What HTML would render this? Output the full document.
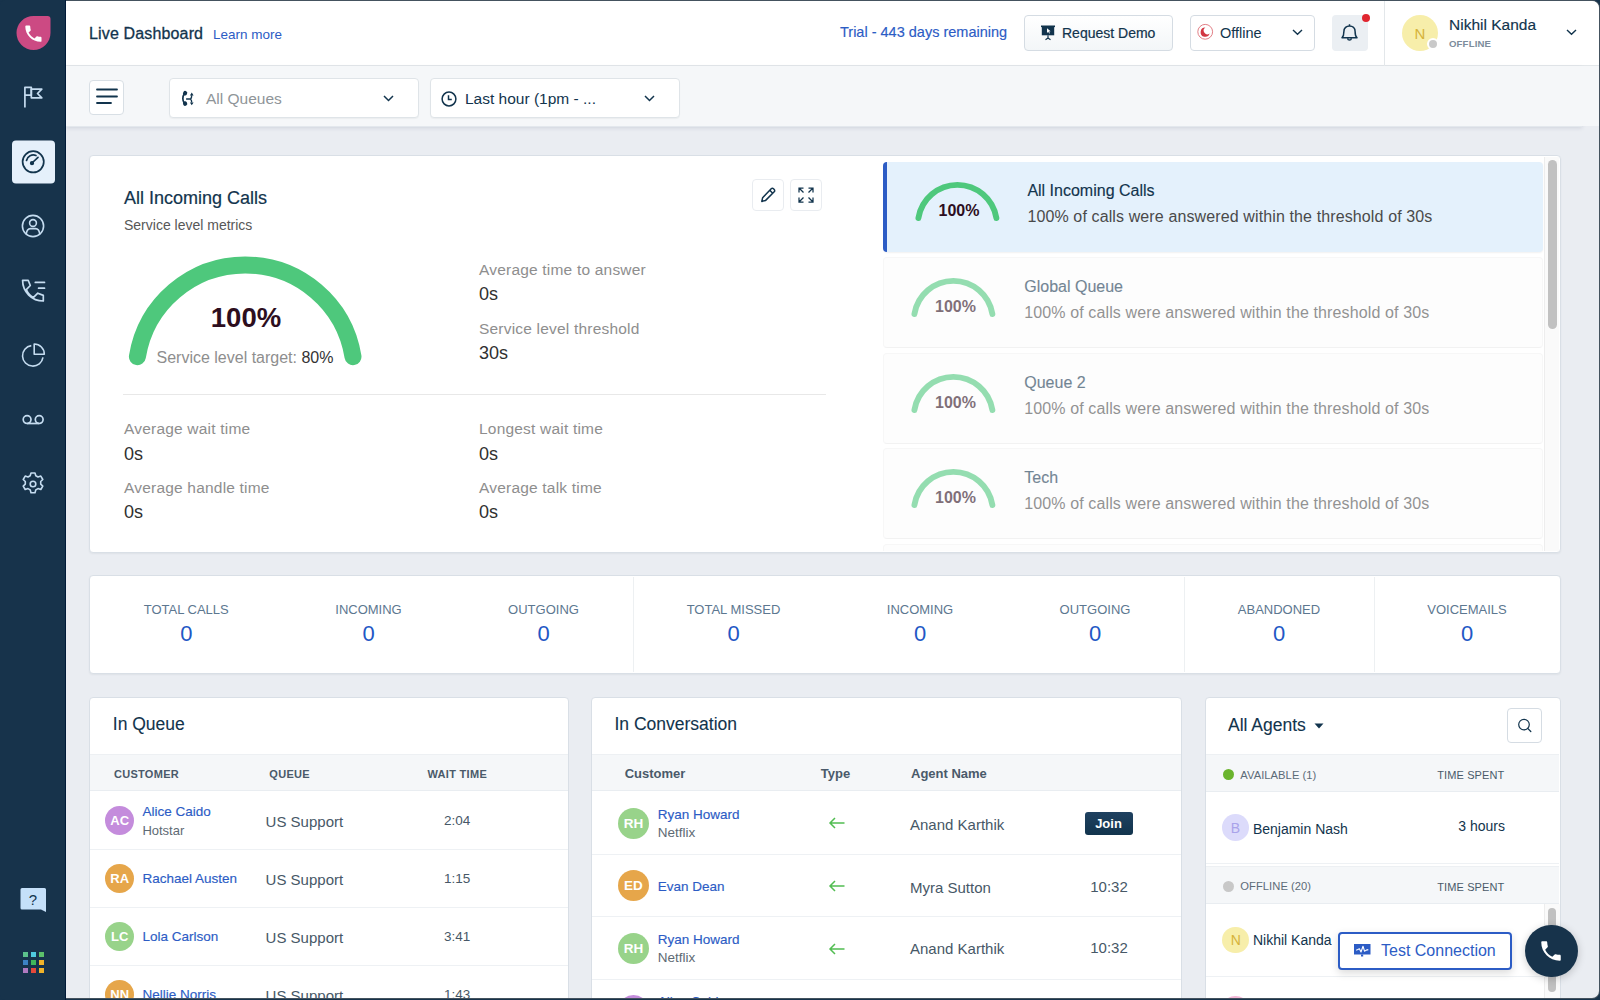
<!DOCTYPE html>
<html><head><meta charset="utf-8">
<style>
*{box-sizing:border-box;margin:0;padding:0}
html,body{width:1600px;height:1000px;overflow:hidden;background:#17334b}
body{font-family:"Liberation Sans",sans-serif;color:#12344d;position:relative}
.t{position:absolute;white-space:nowrap}
#side{position:absolute;left:0;top:0;width:66px;height:1000px;background:#17334b;border-radius:5px 0 0 5px}
#sideline{position:absolute;left:65px;top:0;width:1px;height:1000px;background:#001a38}
#win{position:absolute;left:66px;top:0;width:1534px;height:999px;border-radius:0 8px 8px 0;overflow:hidden;background:#44525e}
#inner{position:absolute;left:0;top:1px;width:1533px;height:997px;border-radius:0 7px 7px 0;overflow:hidden;background:#eaedf2}
#hdr{position:absolute;left:0;top:0;width:1533px;height:65px;background:#fff;border-bottom:1px solid #e1e5e9}
#fbar{position:absolute;left:0;top:65px;width:1533px;height:61px;background:#f5f7f9;box-shadow:0 1px 3px rgba(40,60,80,.18)}
.card{position:absolute;background:#fff;border:1px solid #dde3e8;border-radius:4px}
.btn{position:absolute;border:1px solid #cfd7df;border-radius:4px;background:#f5f7f9}

#pg{position:absolute;left:-66px;top:-1px;width:1600px;height:1000px}
.lh{line-height:1}
.ic{position:absolute;overflow:visible}
</style></head><body>
<div id="side">
<svg width="66" height="1000" viewBox="0 0 66 1000" style="position:absolute;left:0;top:0">
  <!-- logo -->
  <path d="M33.5 16 H47.5 A3 3 0 0 1 50.5 19 V33 A17 17 0 1 1 33.5 16 Z" fill="#cc4a83"/>
  <path transform="translate(22.6 22.9) scale(0.9)" d="M6.62 10.79c1.44 2.83 3.76 5.14 6.59 6.59l2.2-2.2c.27-.27.67-.36 1.02-.24 1.12.37 2.33.57 3.57.57.55 0 1 .45 1 1V20c0 .55-.45 1-1 1-9.39 0-17-7.61-17-17 0-.55.45-1 1-1h3.5c.55 0 1 .45 1 1 0 1.250.2 2.45.57 3.57.11.35.03.74-.25 1.02l-2.2 2.2z" fill="#fff"/>
  <!-- flag -->
  <g fill="none" stroke="#c5dcf0" stroke-width="1.7" stroke-linejoin="round">
    <path d="M24.9 107.5 V87.3 H31.3 V95.1 H24.9"/>
    <path d="M31.3 89.2 H41.8 L37.5 93.5 L41.8 97.8 H31.3 Z"/>
  </g>
  <!-- active -->
  <rect x="12" y="140.5" width="43" height="43" rx="4" fill="#e5f0fb"/>
  <g fill="none" stroke="#12344d" stroke-width="1.7">
    <circle cx="33.2" cy="161.8" r="10.6"/>
    <path d="M26.5 160.5 A7 7 0 0 1 36 155.5" stroke-linecap="round"/>
    <path d="M32 163 L38 157.3" stroke-linecap="round"/>
    <circle cx="32" cy="163.2" r="1.3" fill="#12344d"/>
  </g>
  <!-- contact -->
  <g fill="none" stroke="#c5dcf0" stroke-width="1.6">
    <circle cx="33" cy="226" r="10.6"/>
    <circle cx="33" cy="223" r="3.4"/>
    <path d="M26.2 234.5 C26.5 230.5 28 228.6 30.5 228.6 H35.5 C38 228.6 39.5 230.5 39.8 234.5"/>
  </g>
  <!-- call list -->
  <g fill="none" stroke="#c5dcf0" stroke-width="1.7" stroke-linejoin="round" stroke-linecap="round">
    <path d="M22.6 280.3 H28.2 L30.3 285.5 L26.3 289.6 C28 293.5 30.5 296 33.5 297.4 L37.8 293.2 L43.3 295.4 V301 C32 301 22.6 292 22.6 280.3 Z"/>
    <path d="M35.3 282.4 H44.5"/><path d="M38.6 288.2 H44.5"/>
  </g>
  <!-- pie -->
  <g fill="none" stroke="#c5dcf0" stroke-width="1.6" stroke-linejoin="round">
    <path d="M31.3 345.6 A10.3 10.3 0 1 0 43 357.4"/>
    <path d="M34.2 344 A10.2 10.2 0 0 1 44.3 354.3 H34.2 Z"/>
  </g>
  <!-- voicemail -->
  <g fill="none" stroke="#c5dcf0" stroke-width="1.7">
    <circle cx="27.1" cy="419.6" r="3.9"/>
    <circle cx="39.2" cy="419.6" r="3.9"/>
    <path d="M27.1 423.5 H39.2"/>
  </g>
  <!-- gear -->
  <g fill="none" stroke="#c5dcf0" stroke-width="1.6" stroke-linejoin="round">
    <path d="M31 473 h4 l0.8 2.8 l2.2 1.2 l2.8-0.9 l2 3.4 l-2.1 2 v2.6 l2.1 2 l-2 3.4 l-2.8-0.9 l-2.2 1.3 l-0.8 2.8 h-4 l-0.8-2.8 l-2.2-1.3 l-2.8 0.9 l-2-3.4 l2.1-2 v-2.6 l-2.1-2 l2-3.4 l2.8 0.9 l2.2-1.2 z"/>
    <circle cx="33" cy="484" r="2.8"/>
  </g>
  <!-- help -->
  <path d="M22 888 H44.5 A1.5 1.5 0 0 1 46 889.5 V912 L41 909.5 H22 A1.5 1.5 0 0 1 20.5 908 V889.5 A1.5 1.5 0 0 1 22 888 Z" fill="#c5e0f9"/>
  <text x="33" y="904.5" font-family="Liberation Sans" font-size="15" fill="#12344d" text-anchor="middle">?</text>
  <!-- apps -->
  <rect x="23" y="952" width="5" height="5" fill="#5cc28c"/>
  <rect x="31" y="952" width="5" height="5" fill="#4fcbe0"/>
  <rect x="39" y="952" width="5" height="5" fill="#5cc06a"/>
  <rect x="23" y="960" width="5" height="5" fill="#3c82c4"/>
  <rect x="31" y="960" width="5" height="5" fill="#41b75a"/>
  <rect x="39" y="960" width="5" height="5" fill="#f0b329"/>
  <rect x="23" y="968" width="5" height="5" fill="#b07ac0"/>
  <rect x="31" y="968" width="5" height="5" fill="#e5493a"/>
  <rect x="39" y="968" width="5" height="5" fill="#f0b329"/>
</svg>
</div>
<div id="sideline"></div>
<div id="win"><div id="inner">
<div id="pg">
  <div style="position:absolute;left:66px;top:0;width:1534px;height:66px;background:#fff;border-bottom:1px solid #e3e7ea"></div>
  <div style="position:absolute;left:66px;top:66px;width:1516px;height:60px;background:#f5f7f9;box-shadow:0 1px 0 #e3e8ed,0 2px 4px rgba(40,60,90,.14)"></div><div style="position:absolute;left:1582px;top:66px;width:18px;height:60px;background:#f5f7f9"></div>
  <div class="t lh" style="left:89px;top:26px;font-size:16px;letter-spacing:0.15px;color:#12344d;-webkit-text-stroke:0.3px #12344d">Live Dashboard</div>
  <div class="t lh" style="left:213px;top:28px;font-size:13.5px;color:#2c5cc5">Learn more</div>
  <div class="t lh" style="left:840px;top:25.3px;font-size:14.5px;color:#2c5cc5;-webkit-text-stroke:0.15px #2c5cc5">Trial - 443 days remaining</div>
  <div style="position:absolute;left:1024px;top:15px;width:149px;height:36px;border:1px solid #d5dce3;border-radius:4px;background:linear-gradient(#fff,#f3f6f8)"></div>
  <svg class="ic" style="left:1041px;top:25px" width="15" height="16" viewBox="0 0 15 16">
    <rect x="0" y="0.5" width="14" height="1.6" fill="#12344d"/>
    <rect x="0.8" y="1.5" width="12.4" height="8.8" fill="#12344d"/>
    <path d="M6 3.3 L6 8 L7.2 6.8 L8.2 8.6 L8.9 8.2 L8 6.5 L9.6 6.3 Z" fill="#fff"/>
    <path d="M7 10.3 V13 M7 13 L4.5 14.8 M7 13 L9.5 14.8" stroke="#12344d" stroke-width="1.2"/>
  </svg>
  <div class="t lh" style="left:1062px;top:26px;font-size:14px;color:#12344d;-webkit-text-stroke:0.2px #12344d">Request Demo</div>
  <div style="position:absolute;left:1190px;top:15px;width:125px;height:36px;border:1px solid #d5dce3;border-radius:4px;background:#fff"></div>
  <svg class="ic" style="left:1197px;top:24px" width="17" height="17" viewBox="0 0 17 17">
    <circle cx="8.2" cy="7.8" r="7.4" fill="none" stroke="#e27f86" stroke-width="1"/>
    <path d="M8.3 3.6 A4.6 4.6 0 1 0 12.6 9.6 A3.6 3.6 0 0 1 8.3 3.6 Z" fill="#d23642"/>
  </svg>
  <div class="t lh" style="left:1220px;top:25.5px;font-size:14.5px;color:#12344d">Offline</div>
  <svg class="ic" style="left:1292px;top:29px" width="11" height="7" viewBox="0 0 11 7"><path d="M1 1 L5.5 5.3 L10 1" fill="none" stroke="#12344d" stroke-width="1.4"/></svg>
  <div style="position:absolute;left:1332px;top:15px;width:36px;height:36px;border-radius:4px;background:#ebeff3"></div>
  <svg class="ic" style="left:1340px;top:23px" width="19" height="19" viewBox="0 0 19 19">
    <path d="M9.5 1.2 V2.6 M2 14.8 C3.8 13 3.9 11 3.9 8.4 C3.9 5.1 6.4 2.9 9.5 2.9 C12.6 2.9 15.1 5.1 15.1 8.4 C15.1 11 15.2 13 17 14.8 Z M7.6 15.6 A1.95 1.95 0 0 0 11.4 15.6" fill="none" stroke="#12344d" stroke-width="1.5" stroke-linejoin="round"/>
  </svg>
  <div style="position:absolute;left:1361.5px;top:13.5px;width:8.6px;height:8.6px;border-radius:50%;background:#e0262f"></div>
  <div style="position:absolute;left:1384px;top:1px;width:1px;height:65px;background:#e3e7ea"></div>
  <div style="position:absolute;left:1402px;top:15px;width:36px;height:36px;border-radius:50%;background:#f7eeaa"></div>
  <div class="t lh" style="left:1402px;top:26px;width:36px;text-align:center;font-size:15px;color:#d6b33a">N</div>
  <div style="position:absolute;left:1427px;top:38px;width:12px;height:12px;border-radius:50%;background:#c9c9c9;border:2px solid #fff"></div>
  <div class="t lh" style="left:1449px;top:16.7px;font-size:15.5px;color:#12344d;-webkit-text-stroke:0.15px #12344d">Nikhil Kanda</div>
  <div class="t lh" style="left:1449px;top:38.7px;font-size:9.6px;font-weight:bold;letter-spacing:0.15px;color:#7d8d9c">OFFLINE</div>
  <svg class="ic" style="left:1566px;top:28.5px" width="11" height="7" viewBox="0 0 11 7"><path d="M1 1 L5.5 5.3 L10 1" fill="none" stroke="#12344d" stroke-width="1.4"/></svg>

  <!-- filter bar -->
  <div style="position:absolute;left:89px;top:80px;width:35px;height:35px;border:1px solid #d8dfe5;border-radius:4px;background:#fff"></div>
  <svg class="ic" style="left:96px;top:88px" width="22" height="18" viewBox="0 0 22 18">
    <path d="M1 1.5 H21 M1 8.5 H21 M1 15 H15" stroke="#12344d" stroke-width="1.8" stroke-linecap="round"/>
  </svg>
  <div style="position:absolute;left:169px;top:78px;width:250px;height:40px;border:1px solid #dfe4e8;border-radius:4px;background:#fff;box-shadow:0 1px 1px rgba(0,0,0,.04)"></div>
  <svg class="ic" style="left:180px;top:90px" width="16" height="17" viewBox="0 0 16 17">
    <ellipse cx="5.1" cy="3.2" rx="2.1" ry="2.3" transform="rotate(30 5.1 3.2)" fill="#12344d"/>
    <ellipse cx="5.1" cy="13.6" rx="2.1" ry="2.3" transform="rotate(-30 5.1 13.6)" fill="#12344d"/>
    <path d="M4.2 4 C2.4 6.5 2.4 10.5 4.2 12.8" fill="none" stroke="#12344d" stroke-width="1.7"/>
    <path d="M6.1 9 H10.6 M10.6 9 Q11.7 8 11.7 5.2 M10.6 9 Q11.7 10 11.7 12.6" fill="none" stroke="#12344d" stroke-width="1.4"/>
    <path d="M9.9 5.4 L13.6 5.4 L11.75 2.5 Z M9.9 12.4 L13.6 12.4 L11.75 15.3 Z" fill="#12344d"/>
  </svg>
  <div class="t lh" style="left:206px;top:90.5px;font-size:15.5px;color:#8f9599">All Queues</div>
  <svg class="ic" style="left:383px;top:95px" width="11" height="7" viewBox="0 0 11 7"><path d="M1 1 L5.5 5.5 L10 1" fill="none" stroke="#12344d" stroke-width="1.5"/></svg>
  <div style="position:absolute;left:430px;top:78px;width:250px;height:40px;border:1px solid #dfe4e8;border-radius:4px;background:#fff;box-shadow:0 1px 1px rgba(0,0,0,.04)"></div>
  <svg class="ic" style="left:441px;top:90.5px" width="16" height="16" viewBox="0 0 16 16">
    <circle cx="8" cy="8" r="6.9" fill="none" stroke="#12344d" stroke-width="1.5"/>
    <path d="M7.5 4.2 V8.6 H10.8" fill="none" stroke="#12344d" stroke-width="1.5"/>
  </svg>
  <div class="t lh" style="left:465px;top:90.5px;font-size:15.5px;color:#12344d">Last hour (1pm - ...</div>
  <svg class="ic" style="left:644px;top:95px" width="11" height="7" viewBox="0 0 11 7"><path d="M1 1 L5.5 5.5 L10 1" fill="none" stroke="#12344d" stroke-width="1.5"/></svg>
  <div style="position:absolute;left:89px;top:155px;width:1472px;height:398px;background:#fff;border:1px solid #d9dfe6;border-radius:4px;box-sizing:border-box;box-shadow:0 1px 2px rgba(30,50,70,.06)"></div>
<div class="t lh" style="left:124.00px;top:188.76px;font-size:18px;color:#12344d;-webkit-text-stroke:0.2px #12344d">All Incoming Calls</div>
<div class="t lh" style="left:124.00px;top:217.95px;font-size:14px;color:#575757;">Service level metrics</div>
<div style="position:absolute;left:752px;top:179px;width:32px;height:32px;border:1px solid #e9ecf0;border-radius:4px;background:#fff"></div>
<div style="position:absolute;left:790px;top:179px;width:32px;height:32px;border:1px solid #e9ecf0;border-radius:4px;background:#fff"></div>
<svg class="ic" style="left:760px;top:187px" width="16" height="16" viewBox="0 0 16 16"><path d="M11.2 1.8 a1.6 1.6 0 0 1 2.3 0 l0.7 0.7 a1.6 1.6 0 0 1 0 2.3 L5.4 13.6 L1.8 14.4 L2.6 10.8 Z M9.8 3.3 L12.7 6.2" fill="none" stroke="#12344d" stroke-width="1.5" stroke-linejoin="round"/></svg>
<svg class="ic" style="left:797px;top:186px" width="18" height="18" viewBox="0 0 18 18"><g fill="none" stroke="#12344d" stroke-width="1.25"><path d="M2 6.5 V2 H6.5 M2 2 L6.5 6.5"/><path d="M11.5 2 H16 V6.5 M16 2 L11.5 6.5"/><path d="M2 11.5 V16 H6.5 M2 16 L6.5 11.5"/><path d="M11.5 16 H16 V11.5 M16 16 L11.5 11.5"/></g></svg>
<svg class="ic" style="left:119.20px;top:248.30px" width="252.40" height="143.20" viewBox="119.20 248.30 252.40 143.20"><path d="M137.60 357.04 A109.2 109.2 0 0 1 353.20 357.04" fill="none" stroke="#4ec87c" stroke-width="17" stroke-linecap="round"/></svg>
<div class="t lh" style="left:146.00px;top:304.22px;width:200px;text-align:center;font-size:27.5px;color:#2d0e1e;font-weight:bold">100%</div>
<div class="t lh" style="left:95.00px;top:349.76px;width:300px;text-align:center;font-size:16px;color:#8e8e8e;">Service level target: <span style="color:#333">80%</span></div>
<div class="t lh" style="left:479.00px;top:261.88px;font-size:15.5px;color:#8e8e8e;letter-spacing:0.2px">Average time to answer</div>
<div class="t lh" style="left:479.00px;top:285.36px;font-size:18px;color:#303030;">0s</div>
<div class="t lh" style="left:479.00px;top:320.88px;font-size:15.5px;color:#8e8e8e;letter-spacing:0.2px">Service level threshold</div>
<div class="t lh" style="left:479.00px;top:344.16px;font-size:18px;color:#303030;">30s</div>
<div style="position:absolute;left:123px;top:394px;width:703px;height:1px;background:#e8e8e8"></div>
<div class="t lh" style="left:124.00px;top:420.88px;font-size:15.5px;color:#8e8e8e;letter-spacing:0.2px">Average wait time</div>
<div class="t lh" style="left:124.00px;top:444.76px;font-size:18px;color:#303030;">0s</div>
<div class="t lh" style="left:124.00px;top:479.68px;font-size:15.5px;color:#8e8e8e;letter-spacing:0.2px">Average handle time</div>
<div class="t lh" style="left:124.00px;top:503.46px;font-size:18px;color:#303030;">0s</div>
<div class="t lh" style="left:479.00px;top:420.88px;font-size:15.5px;color:#8e8e8e;letter-spacing:0.2px">Longest wait time</div>
<div class="t lh" style="left:479.00px;top:444.76px;font-size:18px;color:#303030;">0s</div>
<div class="t lh" style="left:479.00px;top:479.68px;font-size:15.5px;color:#8e8e8e;letter-spacing:0.2px">Average talk time</div>
<div class="t lh" style="left:479.00px;top:503.46px;font-size:18px;color:#303030;">0s</div>
<div style="position:absolute;left:883px;top:157px;width:661px;height:394px;overflow:hidden">
<div style="position:absolute;left:-883px;top:-157px;width:1600px;height:1000px">
<div style="position:absolute;left:883px;top:161.5px;width:660px;height:90px;background:#e4f1fc;border-radius:4px;border-left:4px solid #2c5cc5;box-shadow:0 1px 2px rgba(0,0,0,.06)"></div>
<svg class="ic" style="left:911.60px;top:178.90px" width="90.80" height="51.30" viewBox="911.60 178.90 90.80 51.30"><path d="M918.01 217.98 A39.5 39.5 0 0 1 995.99 217.98" fill="none" stroke="#4ec87c" stroke-width="5.9" stroke-linecap="round"/></svg>
<div class="t lh" style="left:909.00px;top:203.36px;width:100px;text-align:center;font-size:16px;color:#2d0e1e;font-weight:bold">100%</div>
<div class="t lh" style="left:1027.40px;top:182.71px;font-size:16px;color:#12344d;-webkit-text-stroke:0.15px #12344d">All Incoming Calls</div>
<div class="t lh" style="left:1027.40px;top:208.96px;font-size:16px;color:#4a4a4a;letter-spacing:0.12px">100% of calls were answered within the threshold of 30s</div>
<div style="position:absolute;left:883px;top:257.0px;width:660px;height:91px;opacity:0.6">
<div style="position:absolute;left:-883px;top:-257.0px;width:1600px;height:1000px">
<div style="position:absolute;left:883px;top:257.0px;width:660px;height:91px;background:#fcfcfd;border:1px solid #f3f3f3;border-bottom-color:#ebebeb;border-radius:4px"></div>
<svg class="ic" style="left:908.40px;top:275.20px" width="90.80" height="51.30" viewBox="908.40 275.20 90.80 51.30"><path d="M914.81 314.28 A39.5 39.5 0 0 1 992.79 314.28" fill="none" stroke="#4ec87c" stroke-width="5.9" stroke-linecap="round"/></svg>
<div class="t lh" style="left:905.50px;top:299.46px;width:100px;text-align:center;font-size:16px;color:#2d0e1e;font-weight:bold">100%</div>
<div class="t lh" style="left:1024.25px;top:279.06px;font-size:16px;color:#12344d;-webkit-text-stroke:0.15px #12344d">Global Queue</div>
<div class="t lh" style="left:1024.25px;top:305.26px;font-size:16px;color:#4a4a4a;letter-spacing:0.12px">100% of calls were answered within the threshold of 30s</div>
</div></div>
<div style="position:absolute;left:883px;top:352.5px;width:660px;height:91px;opacity:0.6">
<div style="position:absolute;left:-883px;top:-352.5px;width:1600px;height:1000px">
<div style="position:absolute;left:883px;top:352.5px;width:660px;height:91px;background:#fcfcfd;border:1px solid #f3f3f3;border-bottom-color:#ebebeb;border-radius:4px"></div>
<svg class="ic" style="left:908.40px;top:370.70px" width="90.80" height="51.30" viewBox="908.40 370.70 90.80 51.30"><path d="M914.81 409.78 A39.5 39.5 0 0 1 992.79 409.78" fill="none" stroke="#4ec87c" stroke-width="5.9" stroke-linecap="round"/></svg>
<div class="t lh" style="left:905.50px;top:394.96px;width:100px;text-align:center;font-size:16px;color:#2d0e1e;font-weight:bold">100%</div>
<div class="t lh" style="left:1024.25px;top:374.56px;font-size:16px;color:#12344d;-webkit-text-stroke:0.15px #12344d">Queue 2</div>
<div class="t lh" style="left:1024.25px;top:400.76px;font-size:16px;color:#4a4a4a;letter-spacing:0.12px">100% of calls were answered within the threshold of 30s</div>
</div></div>
<div style="position:absolute;left:883px;top:448.0px;width:660px;height:91px;opacity:0.6">
<div style="position:absolute;left:-883px;top:-448.0px;width:1600px;height:1000px">
<div style="position:absolute;left:883px;top:448.0px;width:660px;height:91px;background:#fcfcfd;border:1px solid #f3f3f3;border-bottom-color:#ebebeb;border-radius:4px"></div>
<svg class="ic" style="left:908.40px;top:466.20px" width="90.80" height="51.30" viewBox="908.40 466.20 90.80 51.30"><path d="M914.81 505.28 A39.5 39.5 0 0 1 992.79 505.28" fill="none" stroke="#4ec87c" stroke-width="5.9" stroke-linecap="round"/></svg>
<div class="t lh" style="left:905.50px;top:490.46px;width:100px;text-align:center;font-size:16px;color:#2d0e1e;font-weight:bold">100%</div>
<div class="t lh" style="left:1024.25px;top:470.06px;font-size:16px;color:#12344d;-webkit-text-stroke:0.15px #12344d">Tech</div>
<div class="t lh" style="left:1024.25px;top:496.26px;font-size:16px;color:#4a4a4a;letter-spacing:0.12px">100% of calls were answered within the threshold of 30s</div>
</div></div>
<div style="position:absolute;left:883px;top:543.5px;width:660px;height:91px;opacity:0.6">
<div style="position:absolute;left:-883px;top:-543.5px;width:1600px;height:1000px">
<div style="position:absolute;left:883px;top:543.5px;width:660px;height:91px;background:#fcfcfd;border:1px solid #f3f3f3;border-bottom-color:#ebebeb;border-radius:4px"></div>
<svg class="ic" style="left:908.40px;top:561.70px" width="90.80" height="51.30" viewBox="908.40 561.70 90.80 51.30"><path d="M914.81 600.78 A39.5 39.5 0 0 1 992.79 600.78" fill="none" stroke="#4ec87c" stroke-width="5.9" stroke-linecap="round"/></svg>
<div class="t lh" style="left:905.50px;top:585.96px;width:100px;text-align:center;font-size:16px;color:#2d0e1e;font-weight:bold">100%</div>
<div class="t lh" style="left:1024.25px;top:565.56px;font-size:16px;color:#12344d;-webkit-text-stroke:0.15px #12344d">Sales</div>
<div class="t lh" style="left:1024.25px;top:591.76px;font-size:16px;color:#4a4a4a;letter-spacing:0.12px">100% of calls were answered within the threshold of 30s</div>
</div></div>
</div></div>
<div style="position:absolute;left:1544px;top:157px;width:15px;height:394px;background:#fafafa;border-left:1px solid #ededed"></div>
<div style="position:absolute;left:1548.3px;top:159.5px;width:8.4px;height:169px;background:#c1c1c1;border-radius:5px"></div>
<div style="position:absolute;left:89px;top:575px;width:1472px;height:99px;background:#fff;border:1px solid #d9dfe6;border-radius:4px;box-sizing:border-box;box-shadow:0 1px 2px rgba(30,50,70,.06)"></div>
<div class="t lh" style="left:86.25px;top:603.20px;width:200px;text-align:center;font-size:13px;color:#5c7790;">TOTAL CALLS</div>
<div class="t lh" style="left:136.25px;top:623.18px;width:100px;text-align:center;font-size:22px;color:#2257c5;">0</div>
<div class="t lh" style="left:268.50px;top:603.20px;width:200px;text-align:center;font-size:13px;color:#5c7790;">INCOMING</div>
<div class="t lh" style="left:318.50px;top:623.18px;width:100px;text-align:center;font-size:22px;color:#2257c5;">0</div>
<div class="t lh" style="left:443.50px;top:603.20px;width:200px;text-align:center;font-size:13px;color:#5c7790;">OUTGOING</div>
<div class="t lh" style="left:493.50px;top:623.18px;width:100px;text-align:center;font-size:22px;color:#2257c5;">0</div>
<div class="t lh" style="left:633.50px;top:603.20px;width:200px;text-align:center;font-size:13px;color:#5c7790;">TOTAL MISSED</div>
<div class="t lh" style="left:683.50px;top:623.18px;width:100px;text-align:center;font-size:22px;color:#2257c5;">0</div>
<div class="t lh" style="left:820.00px;top:603.20px;width:200px;text-align:center;font-size:13px;color:#5c7790;">INCOMING</div>
<div class="t lh" style="left:870.00px;top:623.18px;width:100px;text-align:center;font-size:22px;color:#2257c5;">0</div>
<div class="t lh" style="left:995.00px;top:603.20px;width:200px;text-align:center;font-size:13px;color:#5c7790;">OUTGOING</div>
<div class="t lh" style="left:1045.00px;top:623.18px;width:100px;text-align:center;font-size:22px;color:#2257c5;">0</div>
<div class="t lh" style="left:1179.00px;top:603.20px;width:200px;text-align:center;font-size:13px;color:#5c7790;">ABANDONED</div>
<div class="t lh" style="left:1229.00px;top:623.18px;width:100px;text-align:center;font-size:22px;color:#2257c5;">0</div>
<div class="t lh" style="left:1367.00px;top:603.20px;width:200px;text-align:center;font-size:13px;color:#5c7790;">VOICEMAILS</div>
<div class="t lh" style="left:1417.00px;top:623.18px;width:100px;text-align:center;font-size:22px;color:#2257c5;">0</div>
<div style="position:absolute;left:632.5px;top:577px;width:1px;height:95px;background:#edf0f2"></div>
<div style="position:absolute;left:1183.5px;top:577px;width:1px;height:95px;background:#edf0f2"></div>
<div style="position:absolute;left:1373.5px;top:577px;width:1px;height:95px;background:#edf0f2"></div>
<div style="position:absolute;left:89px;top:697px;width:480px;height:330px;background:#fff;border:1px solid #d9dfe6;border-radius:4px;box-sizing:border-box"></div>
<div class="t lh" style="left:112.80px;top:716.19px;font-size:17.5px;color:#12344d;-webkit-text-stroke:0.1px #12344d">In Queue</div>
<div style="position:absolute;left:90px;top:753.5px;width:478px;height:37px;background:#f5f7f9;border-top:1px solid #edf0f3;border-bottom:1px solid #e9edf1;box-sizing:border-box"></div>
<div class="t lh" style="left:113.90px;top:768.69px;font-size:11px;color:#4a5a6a;font-weight:bold;letter-spacing:0.3px">CUSTOMER</div>
<div class="t lh" style="left:269.30px;top:768.69px;font-size:11px;color:#4a5a6a;font-weight:bold;letter-spacing:0.3px">QUEUE</div>
<div class="t lh" style="left:427.50px;top:768.69px;font-size:11px;color:#4a5a6a;font-weight:bold;letter-spacing:0.3px">WAIT TIME</div>
<div style="position:absolute;left:105.10000000000001px;top:806.1px;width:29.2px;height:29.2px;background:#c48cdc;border-radius:50%"></div>
<div class="t lh" style="left:89.70px;top:814.38px;width:60px;text-align:center;font-size:13px;color:#fff;font-weight:bold">AC</div>
<div class="t lh" style="left:142.40px;top:805.27px;font-size:13.5px;color:#2c5cc5;-webkit-text-stroke:0.15px #2c5cc5">Alice Caido</div>
<div class="t lh" style="left:142.40px;top:823.70px;font-size:13px;color:#5e6a74;">Hotstar</div>
<div class="t lh" style="left:265.60px;top:814.30px;font-size:15px;color:#475867;">US Support</div>
<div class="t lh" style="left:417.20px;top:814.27px;width:80px;text-align:center;font-size:13.5px;color:#475867;">2:04</div>
<div style="position:absolute;left:90px;top:848.7px;width:478px;height:1px;background:#eef1f4"></div>
<div style="position:absolute;left:105.10000000000001px;top:864.1px;width:29.2px;height:29.2px;background:#e6a64a;border-radius:50%"></div>
<div class="t lh" style="left:89.70px;top:872.38px;width:60px;text-align:center;font-size:13px;color:#fff;font-weight:bold">RA</div>
<div class="t lh" style="left:142.40px;top:872.27px;font-size:13.5px;color:#2c5cc5;-webkit-text-stroke:0.15px #2c5cc5">Rachael Austen</div>
<div class="t lh" style="left:265.60px;top:872.30px;font-size:15px;color:#475867;">US Support</div>
<div class="t lh" style="left:417.20px;top:872.27px;width:80px;text-align:center;font-size:13.5px;color:#475867;">1:15</div>
<div style="position:absolute;left:90px;top:906.7px;width:478px;height:1px;background:#eef1f4"></div>
<div style="position:absolute;left:105.10000000000001px;top:922.1px;width:29.2px;height:29.2px;background:#98d38a;border-radius:50%"></div>
<div class="t lh" style="left:89.70px;top:930.38px;width:60px;text-align:center;font-size:13px;color:#fff;font-weight:bold">LC</div>
<div class="t lh" style="left:142.40px;top:930.27px;font-size:13.5px;color:#2c5cc5;-webkit-text-stroke:0.15px #2c5cc5">Lola Carlson</div>
<div class="t lh" style="left:265.60px;top:930.30px;font-size:15px;color:#475867;">US Support</div>
<div class="t lh" style="left:417.20px;top:930.27px;width:80px;text-align:center;font-size:13.5px;color:#475867;">3:41</div>
<div style="position:absolute;left:90px;top:964.7px;width:478px;height:1px;background:#eef1f4"></div>
<div style="position:absolute;left:105.10000000000001px;top:980.1px;width:29.2px;height:29.2px;background:#e6a64a;border-radius:50%"></div>
<div class="t lh" style="left:89.70px;top:988.38px;width:60px;text-align:center;font-size:13px;color:#fff;font-weight:bold">NN</div>
<div class="t lh" style="left:142.40px;top:988.27px;font-size:13.5px;color:#2c5cc5;-webkit-text-stroke:0.15px #2c5cc5">Nellie Norris</div>
<div class="t lh" style="left:265.60px;top:988.30px;font-size:15px;color:#475867;">US Support</div>
<div class="t lh" style="left:417.20px;top:988.27px;width:80px;text-align:center;font-size:13.5px;color:#475867;">1:43</div>
<div style="position:absolute;left:591px;top:697px;width:591px;height:330px;background:#fff;border:1px solid #d9dfe6;border-radius:4px;box-sizing:border-box"></div>
<div class="t lh" style="left:614.50px;top:716.44px;font-size:17.5px;color:#12344d;-webkit-text-stroke:0.1px #12344d">In Conversation</div>
<div style="position:absolute;left:592px;top:753.5px;width:589px;height:37px;background:#f5f7f9;border-top:1px solid #edf0f3;border-bottom:1px solid #e9edf1;box-sizing:border-box"></div>
<div class="t lh" style="left:624.70px;top:767.40px;font-size:13px;color:#4a5a6a;font-weight:bold">Customer</div>
<div class="t lh" style="left:820.80px;top:767.40px;font-size:13px;color:#4a5a6a;font-weight:bold">Type</div>
<div class="t lh" style="left:911.00px;top:767.40px;font-size:13px;color:#4a5a6a;font-weight:bold">Agent Name</div>
<div style="position:absolute;left:617.8px;top:807.6px;width:31.2px;height:31.2px;background:#98d38a;border-radius:50%"></div>
<div class="t lh" style="left:603.40px;top:816.63px;width:60px;text-align:center;font-size:13.5px;color:#fff;font-weight:bold">RH</div>
<div class="t lh" style="left:657.80px;top:807.57px;font-size:13.5px;color:#2c5cc5;-webkit-text-stroke:0.15px #2c5cc5">Ryan Howard</div>
<div class="t lh" style="left:657.80px;top:825.77px;font-size:13.5px;color:#5e6a74;">Netflix</div>
<svg class="ic" style="left:828px;top:817.2px" width="18" height="12" viewBox="0 0 18 12"><path d="M16.5 6 H2 M7 1 L2 6 L7 11" fill="none" stroke="#52bd52" stroke-width="1.5"/></svg>
<div class="t lh" style="left:910.00px;top:817.30px;font-size:15px;color:#475867;">Anand Karthik</div>
<div style="position:absolute;left:1084.5px;top:811.5px;width:48.5px;height:23px;background:linear-gradient(#1f4160,#12344d);border-radius:3px"></div>
<div class="t lh" style="left:1078.50px;top:817.25px;width:60px;text-align:center;font-size:13px;color:#fff;font-weight:bold">Join</div>
<div style="position:absolute;left:592px;top:853.75px;width:589px;height:1px;background:#eef1f4"></div>
<div style="position:absolute;left:617.8px;top:870.1999999999999px;width:31.2px;height:31.2px;background:#e6a64a;border-radius:50%"></div>
<div class="t lh" style="left:603.40px;top:879.23px;width:60px;text-align:center;font-size:13.5px;color:#fff;font-weight:bold">ED</div>
<div class="t lh" style="left:657.80px;top:879.57px;font-size:13.5px;color:#2c5cc5;-webkit-text-stroke:0.15px #2c5cc5">Evan Dean</div>
<svg class="ic" style="left:828px;top:879.8px" width="18" height="12" viewBox="0 0 18 12"><path d="M16.5 6 H2 M7 1 L2 6 L7 11" fill="none" stroke="#52bd52" stroke-width="1.5"/></svg>
<div class="t lh" style="left:910.00px;top:879.80px;font-size:15px;color:#475867;">Myra Sutton</div>
<div class="t lh" style="left:1069.00px;top:879.05px;width:80px;text-align:center;font-size:15px;color:#475867;">10:32</div>
<div style="position:absolute;left:592px;top:916.25px;width:589px;height:1px;background:#eef1f4"></div>
<div style="position:absolute;left:617.8px;top:932.9px;width:31.2px;height:31.2px;background:#98d38a;border-radius:50%"></div>
<div class="t lh" style="left:603.40px;top:941.93px;width:60px;text-align:center;font-size:13.5px;color:#fff;font-weight:bold">RH</div>
<div class="t lh" style="left:657.80px;top:932.87px;font-size:13.5px;color:#2c5cc5;-webkit-text-stroke:0.15px #2c5cc5">Ryan Howard</div>
<div class="t lh" style="left:657.80px;top:951.07px;font-size:13.5px;color:#5e6a74;">Netflix</div>
<svg class="ic" style="left:828px;top:942.5px" width="18" height="12" viewBox="0 0 18 12"><path d="M16.5 6 H2 M7 1 L2 6 L7 11" fill="none" stroke="#52bd52" stroke-width="1.5"/></svg>
<div class="t lh" style="left:910.00px;top:941.05px;font-size:15px;color:#475867;">Anand Karthik</div>
<div class="t lh" style="left:1069.00px;top:940.30px;width:80px;text-align:center;font-size:15px;color:#475867;">10:32</div>
<div style="position:absolute;left:592px;top:978.75px;width:589px;height:1px;background:#eef1f4"></div>
<div style="position:absolute;left:617.8px;top:995.4px;width:31.2px;height:31.2px;background:#c48cdc;border-radius:50%"></div>
<div class="t lh" style="left:603.40px;top:1004.43px;width:60px;text-align:center;font-size:13.5px;color:#fff;font-weight:bold">AC</div>
<div class="t lh" style="left:657.80px;top:995.37px;font-size:13.5px;color:#2c5cc5;-webkit-text-stroke:0.15px #2c5cc5">Alice Caido</div>
<div class="t lh" style="left:657.80px;top:1013.57px;font-size:13.5px;color:#5e6a74;">Hotstar</div>
<svg class="ic" style="left:828px;top:1005.0px" width="18" height="12" viewBox="0 0 18 12"><path d="M16.5 6 H2 M7 1 L2 6 L7 11" fill="none" stroke="#52bd52" stroke-width="1.5"/></svg>
<div class="t lh" style="left:910.00px;top:1003.30px;font-size:15px;color:#475867;">Anand Karthik</div>
<div class="t lh" style="left:1069.00px;top:1003.30px;width:80px;text-align:center;font-size:15px;color:#475867;">10:32</div>
<div style="position:absolute;left:1205px;top:697px;width:356px;height:330px;background:#fff;border:1px solid #d9dfe6;border-radius:4px;box-sizing:border-box"></div>
<div class="t lh" style="left:1228.00px;top:717.29px;font-size:17.5px;color:#12344d;-webkit-text-stroke:0.1px #12344d">All Agents</div>
<svg class="ic" style="left:1314px;top:722.5px" width="10" height="6" viewBox="0 0 10 6"><path d="M0.5 0.5 H9.5 L5 5.5 Z" fill="#12344d"/></svg>
<div style="position:absolute;left:1507px;top:708px;width:35px;height:35px;border:1px solid #d5dce3;border-radius:4px;background:#fff"></div>
<svg class="ic" style="left:1516.5px;top:718px" width="16" height="16" viewBox="0 0 16 16"><circle cx="7" cy="6.6" r="5.3" fill="none" stroke="#12344d" stroke-width="1.2"/><path d="M10.7 10.4 L13.8 13.5" stroke="#12344d" stroke-width="1.3" stroke-linecap="round"/></svg>
<div style="position:absolute;left:1206px;top:753.7px;width:353px;height:38px;background:#f5f7f9;border-top:1px solid #edf0f3;border-bottom:1px solid #e9edf1;box-sizing:border-box"></div>
<div style="position:absolute;left:1223.4px;top:769.2px;width:11px;height:11px;background:#6ab42d;border-radius:50%"></div>
<div class="t lh" style="left:1240.30px;top:769.52px;font-size:11.2px;color:#5c6b78;letter-spacing:0.05px">AVAILABLE (1)</div>
<div class="t lh" style="left:1437.30px;top:769.69px;font-size:11px;color:#4a5a6a;letter-spacing:0.1px">TIME SPENT</div>
<div style="position:absolute;left:1222.2px;top:814.3000000000001px;width:26.6px;height:26.6px;background:#dcdbfb;border-radius:50%"></div>
<div class="t lh" style="left:1205.50px;top:820.79px;width:60px;text-align:center;font-size:14px;color:#a9a3ea;">B</div>
<div class="t lh" style="left:1252.90px;top:821.50px;font-size:14px;color:#12344d;">Benjamin Nash</div>
<div class="t lh" style="left:1405.00px;top:819.40px;width:100px;text-align:right;font-size:14px;color:#12344d;">3 hours</div>
<div style="position:absolute;left:1206px;top:863px;width:353px;height:1px;background:#eef1f4"></div>
<div style="position:absolute;left:1206px;top:866.3px;width:353px;height:37.5px;background:#f5f7f9;border-top:1px solid #edf0f3;border-bottom:1px solid #e9edf1;box-sizing:border-box"></div>
<div style="position:absolute;left:1223.2px;top:881.1px;width:11px;height:11px;background:#c8c8c8;border-radius:50%"></div>
<div class="t lh" style="left:1240.30px;top:881.32px;font-size:11.2px;color:#5c6b78;letter-spacing:0.05px">OFFLINE (20)</div>
<div class="t lh" style="left:1437.30px;top:881.59px;font-size:11px;color:#4a5a6a;letter-spacing:0.1px">TIME SPENT</div>
<div style="position:absolute;left:1222.4px;top:926.5px;width:26.6px;height:26.6px;background:#f7eeaa;border-radius:50%"></div>
<div class="t lh" style="left:1205.70px;top:932.99px;width:60px;text-align:center;font-size:14px;color:#d6b33a;">N</div>
<div class="t lh" style="left:1253.00px;top:932.85px;font-size:14px;color:#12344d;">Nikhil Kanda</div>
<div style="position:absolute;left:1206px;top:976px;width:338px;height:1px;background:#eef1f4"></div>
<div style="position:absolute;left:1222.4px;top:995.7px;width:26.6px;height:26.6px;background:#f4b8d8;border-radius:50%"></div>
<div class="t lh" style="left:1205.70px;top:1002.19px;width:60px;text-align:center;font-size:14px;color:#fff;"></div>
<div style="position:absolute;left:1543.5px;top:904px;width:16px;height:100px;background:#fafafa;border-left:1px solid #ededed"></div>
<div style="position:absolute;left:1548.2px;top:908px;width:8px;height:84px;background:#c1c1c1;border-radius:4px"></div>
<div style="position:absolute;left:1338px;top:931.5px;width:174px;height:38px;background:#fff;border:2px solid #2c5cc5;border-radius:4px;box-shadow:0 3px 8px rgba(0,0,0,.15)"></div>
<svg class="ic" style="left:1354px;top:943.5px" width="17" height="13" viewBox="0 0 17 13"><rect x="0" y="0" width="16.5" height="10.5" fill="#2c5cc5"/><path d="M2.2 6.2 L3.8 5.6 L5.4 4.8 L7 8 L9 2.2 L10.5 7.2 L12.3 6.1 L14.3 5.6" fill="none" stroke="#fff" stroke-width="1.1" stroke-linejoin="round"/><rect x="7" y="10.5" width="2.2" height="2" fill="#2c5cc5"/></svg>
<div class="t lh" style="left:1381.00px;top:942.96px;font-size:16px;color:#2c5cc5;">Test Connection</div>
<div style="position:absolute;left:1525px;top:924.6px;width:52.6px;height:52.6px;background:#17334b;border-radius:50%;box-shadow:0 2px 8px rgba(0,0,0,.2)"></div>
<svg class="ic" style="left:1537.5px;top:937.5px" width="26" height="26" viewBox="0 0 24 24"><path d="M6.62 10.79c1.44 2.83 3.76 5.14 6.59 6.59l2.2-2.2c.27-.27.67-.36 1.02-.24 1.12.37 2.33.57 3.57.57.55 0 1 .45 1 1V20c0 .55-.45 1-1 1-9.39 0-17-7.61-17-17 0-.55.45-1 1-1h3.5c.55 0 1 .45 1 1 0 1.25.2 2.45.57 3.57.11.35.03.74-.25 1.02l-2.2 2.2z" fill="#fff"/></svg>
</div>
</div></div>
</body></html>
